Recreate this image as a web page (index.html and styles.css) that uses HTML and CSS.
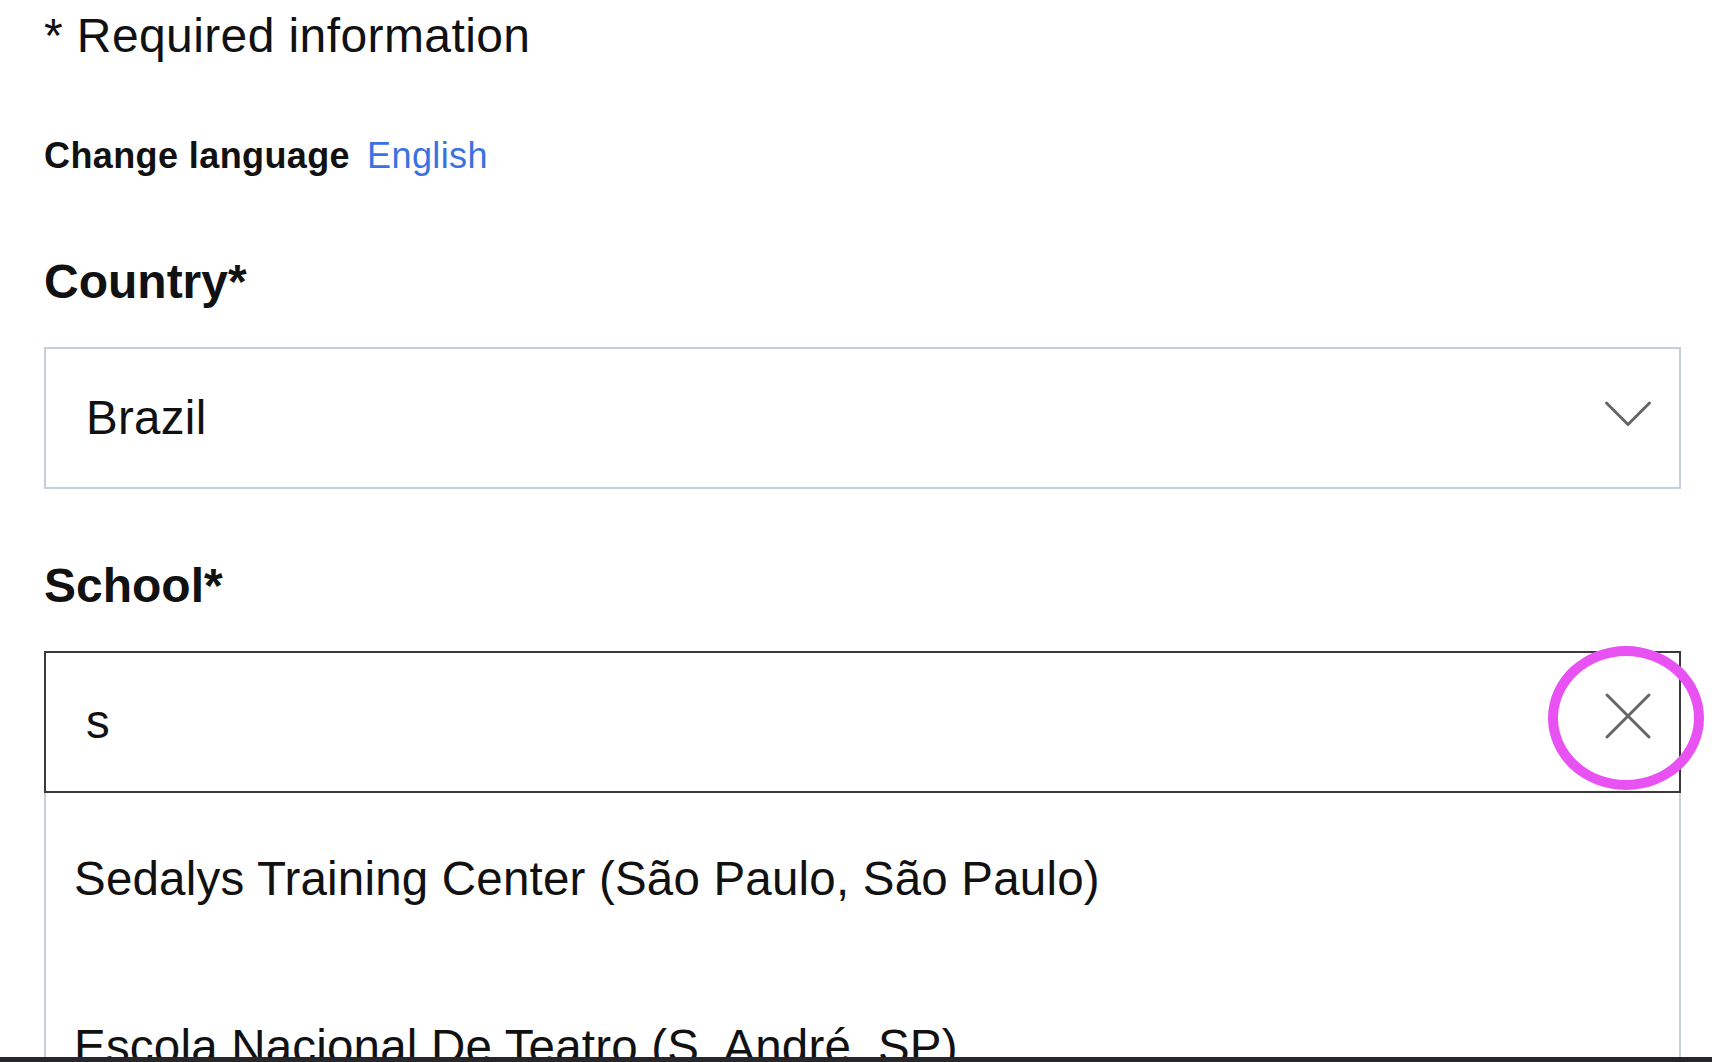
FILE: index.html
```html
<!DOCTYPE html>
<html lang="en">
<head>
<meta charset="utf-8">
<title>School selection</title>
<link rel="stylesheet" href="styles.css">
</head>
<body>
<main class="form">
  <p class="required-note">* Required information</p>
  <div class="language-row">
    <span class="language-label">Change language</span>
    <a class="language-link" href="#">English</a>
  </div>
  <div class="field field-country">
    <span class="field-label">Country*</span>
    <div class="select-box">
      <span class="field-value">Brazil</span>
      <svg class="chevron" width="48" height="28" viewBox="0 0 48 28" aria-hidden="true">
        <path d="M2.5 3 L24 24.5 L45.5 3" fill="none" stroke="#666" stroke-width="3" stroke-linecap="round" stroke-linejoin="round"/>
      </svg>
    </div>
  </div>
  <div class="field field-school">
    <span class="field-label">School*</span>
    <div class="combo">
      <div class="combo-input">
        <span class="field-value">s</span>
        <svg class="clear-icon" width="48" height="48" viewBox="0 0 48 48" aria-hidden="true">
          <path d="M3 3 L45 45 M45 3 L3 45" fill="none" stroke="#666" stroke-width="3" stroke-linecap="round"/>
        </svg>
        <span class="highlight-ring"></span>
      </div>
      <ul class="options">
        <li class="option">Sedalys Training Center (São Paulo, São Paulo)</li>
        <li class="option">Escola Nacional De Teatro (S. André, SP)</li>
      </ul>
    </div>
  </div>
</main>
<div class="screen-edge"></div>
</body>
</html>
```

FILE: styles.css
```css
html, body {
  margin: 0;
  padding: 0;
  height: 100%;
  overflow: hidden;
  background: #ffffff;
}

body {
  font-family: "Liberation Sans", Arial, Helvetica, sans-serif;
  color: #111111;
}

.form {
  display: flex;
  flex-direction: column;
  padding: 8px 31px 0 44px;
}

.required-note {
  margin: 0;
  font-size: 48px;
  line-height: 56px;
  letter-spacing: 0.4px;
}

.language-row {
  margin-top: 70px;
  display: flex;
  gap: 17px;
  font-size: 36px;
  line-height: 44px;
  letter-spacing: 0.4px;
}

.language-label {
  font-weight: 700;
}

.language-link {
  color: #3a72e3;
  text-decoration: none;
}

.field-country {
  margin-top: 76px;
}

.field-school {
  margin-top: 69px;
}

.field-label {
  display: block;
  font-size: 48px;
  line-height: 56px;
  font-weight: 700;
}

.select-box,
.combo-input {
  margin-top: 37px;
  height: 142px;
  box-sizing: border-box;
  display: flex;
  align-items: center;
  justify-content: space-between;
  padding: 0 27px 0 40px;
}

.select-box {
  border: 2px solid #c6cedb;
}

.combo-input {
  position: relative;
  border: 2px solid #3a3a3a;
}

.field-value {
  font-size: 47.5px;
  line-height: 56px;
  letter-spacing: 0.3px;
}

.chevron {
  display: block;
  margin-bottom: 8px;
}

.clear-icon {
  display: block;
  margin-bottom: 12px;
}

.highlight-ring {
  position: absolute;
  left: 1502px;
  top: -7px;
  width: 156px;
  height: 144px;
  box-sizing: border-box;
  border: 10px solid #e952f2;
  border-radius: 50%;
}

.options {
  list-style: none;
  margin: 0;
  padding: 0;
  border-left: 2px solid #c8d0dc;
  border-right: 2px solid #c8d0dc;
}

.option {
  font-size: 47.5px;
  line-height: 56px;
  letter-spacing: 0.2px;
  padding: 58px 28px 54px;
  white-space: nowrap;
}

.screen-edge {
  position: fixed;
  left: 0;
  right: 0;
  bottom: 0;
  height: 5px;
  background: #27272b;
}
```
